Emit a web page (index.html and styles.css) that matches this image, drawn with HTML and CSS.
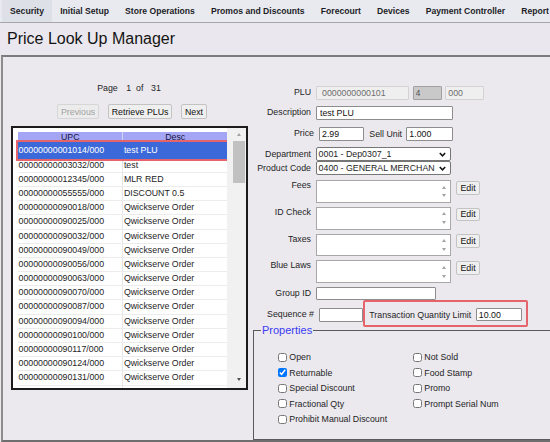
FILE: index.html
```html
<!DOCTYPE html>
<html lang="en">
<head>
    <meta charset="UTF-8">
    <title>Price Look Up Manager</title>
    <link rel="stylesheet" href="styles.css">
</head>
<body>

<div class="topnav">
    <span class="tab active">Security</span>
    <span class="tab">Initial Setup</span>
    <span class="tab">Store Operations</span>
    <span class="tab">Promos and Discounts</span>
    <span class="tab">Forecourt</span>
    <span class="tab">Devices</span>
    <span class="tab">Payment Controller</span>
    <span class="tab">Report</span>
</div>

<div class="titlebar"><h1>Price Look Up Manager</h1></div>

<div class="main">
    <div class="left">
        <div class="pager">Page <span class="pg-cur">1</span> of <span class="pg-total">31</span></div>
        <div class="pager-btns">
            <button class="btn" disabled>Previous</button>
            <button class="btn">Retrieve PLUs</button>
            <button class="btn">Next</button>
        </div>
        <div class="plu-list">
            <div class="plu-table">
                <div class="plu-head"><span>UPC</span><span>Desc</span></div>
                <div class="plu-row selected"><span>00000000001014/000</span><span>test PLU</span></div>
                <div class="plu-row"><span>00000000003032/000</span><span>test</span></div>
                <div class="plu-row"><span>00000000012345/000</span><span>MLR RED</span></div>
                <div class="plu-row"><span>00000000055555/000</span><span>DISCOUNT 0.5</span></div>
                <div class="plu-row"><span>00000000090018/000</span><span>Qwickserve Order</span></div>
                <div class="plu-row"><span>00000000090025/000</span><span>Qwickserve Order</span></div>
                <div class="plu-row"><span>00000000090032/000</span><span>Qwickserve Order</span></div>
                <div class="plu-row"><span>00000000090049/000</span><span>Qwickserve Order</span></div>
                <div class="plu-row"><span>00000000090056/000</span><span>Qwickserve Order</span></div>
                <div class="plu-row"><span>00000000090063/000</span><span>Qwickserve Order</span></div>
                <div class="plu-row"><span>00000000090070/000</span><span>Qwickserve Order</span></div>
                <div class="plu-row"><span>00000000090087/000</span><span>Qwickserve Order</span></div>
                <div class="plu-row"><span>00000000090094/000</span><span>Qwickserve Order</span></div>
                <div class="plu-row"><span>00000000090100/000</span><span>Qwickserve Order</span></div>
                <div class="plu-row"><span>00000000090117/000</span><span>Qwickserve Order</span></div>
                <div class="plu-row"><span>00000000090124/000</span><span>Qwickserve Order</span></div>
                <div class="plu-row"><span>00000000090131/000</span><span>Qwickserve Order</span></div>
                <div class="plu-row"><span></span><span></span></div>
            </div>
            <div class="vscroll">
                <div class="sb-arrow up"></div>
                <div class="sb-thumb"></div>
                <div class="sb-arrow down"></div>
            </div>
        </div>
    </div>

    <div class="right">
        <div class="f-row">
            <label class="lbl">PLU</label>
            <input class="in plu-code" type="text" value="0000000000101" disabled>
            <input class="in plu-mod" type="text" value="4" disabled>
            <input class="in plu-suf" type="text" value="000" disabled>
        </div>
        <div class="f-row mt6">
            <label class="lbl">Description</label>
            <input class="in desc" type="text" value="test PLU">
        </div>
        <div class="f-row mt7">
            <label class="lbl wide">Price</label>
            <input class="in price" type="text" value="2.99">
            <label class="sub-lbl">Sell Unit</label>
            <input class="in sell-unit" type="text" value="1.000">
        </div>
        <div class="f-row mt6">
            <label class="lbl">Department</label>
            <div class="sel">
                <span>0001 - Dep0307_1</span>
                <svg width="7" height="5" viewBox="0 0 7 5"><path d="M0.8 1 L3.5 3.8 L6.2 1" fill="none" stroke="#111" stroke-width="1.5"/></svg>
            </div>
        </div>
        <div class="f-row">
            <label class="lbl">Product Code</label>
            <div class="sel">
                <span>0400 - GENERAL MERCHAN</span>
                <svg width="7" height="5" viewBox="0 0 7 5"><path d="M0.8 1 L3.5 3.8 L6.2 1" fill="none" stroke="#111" stroke-width="1.5"/></svg>
            </div>
        </div>
        <div class="f-row box-row mt5">
            <label class="lbl">Fees</label>
            <div class="lbox"><div class="lbox-sb"></div></div>
            <button class="btn edit">Edit</button>
        </div>
        <div class="f-row box-row mt4">
            <label class="lbl">ID Check</label>
            <div class="lbox"><div class="lbox-sb"></div></div>
            <button class="btn edit">Edit</button>
        </div>
        <div class="f-row box-row mt4">
            <label class="lbl">Taxes</label>
            <div class="lbox"><div class="lbox-sb"></div></div>
            <button class="btn edit">Edit</button>
        </div>
        <div class="f-row box-row mt4">
            <label class="lbl">Blue Laws</label>
            <div class="lbox"><div class="lbox-sb"></div></div>
            <button class="btn edit">Edit</button>
        </div>
        <div class="f-row mt4">
            <label class="lbl">Group ID</label>
            <input class="in group-id" type="text" value="">
        </div>
        <div class="f-row seq-row">
            <label class="lbl wide">Sequence #</label>
            <input class="in seq" type="text" value="">
            <div class="tql">
                <label>Transaction Quantity Limit</label>
                <input class="in" type="text" value="10.00">
            </div>
        </div>

        <fieldset class="props">
            <legend>Properties</legend>
            <div class="props-grid">
                <label class="chk"><input type="checkbox">Open</label>
                <label class="chk"><input type="checkbox">Not Sold</label>
                <label class="chk"><input type="checkbox" checked>Returnable</label>
                <label class="chk"><input type="checkbox">Food Stamp</label>
                <label class="chk"><input type="checkbox">Special Discount</label>
                <label class="chk"><input type="checkbox">Promo</label>
                <label class="chk"><input type="checkbox">Fractional Qty</label>
                <label class="chk"><input type="checkbox">Prompt Serial Num</label>
                <label class="chk"><input type="checkbox">Prohibit Manual Discount</label>
            </div>
        </fieldset>
    </div>
</div>

</body>
</html>
```

FILE: styles.css
```css
* {
    box-sizing: border-box;
}
body {
    margin: 0;
    width: 550px;
    height: 442px;
    overflow: hidden;
    font-family: "Liberation Sans", Arial, sans-serif;
    font-size: 8.8px;
    color: #1e1e1e;
    background: #ebe9ee;
}

/* top menu */
.topnav {
    display: flex;
    height: 23px;
    padding-left: 2px;
    background: #e8eaef;
    border-bottom: 1px solid #a7a7ab;
    white-space: nowrap;
    overflow: hidden;
}
.tab {
    padding: 0 8.1px;
    line-height: 22px;
    font-size: 8.6px;
    font-weight: bold;
    color: #1d1d27;
}
.tab.active {
    background: #dde0e7;
}

.titlebar {
    display: flex;
    align-items: center;
    height: 32px;
    padding-left: 7px;
    background: #eae8ee;
}
.titlebar h1 {
    margin: 0;
    font-size: 16px;
    font-weight: normal;
    color: #141414;
}

.main {
    display: flex;
    height: 387px;
    margin-left: 1px;
    border-top: 2px solid #7b7b7b;
    border-left: 2px solid #8c8c8c;
    border-bottom: 2px solid #6e6e6e;
}

/* left: PLU list */
.left {
    width: 252px;
    flex: none;
    display: flex;
    flex-direction: column;
    align-items: center;
}
.pager {
    padding-top: 26px;
    line-height: 11px;
}
.pg-cur {
    margin-left: 6px;
    margin-right: 2.5px;
}
.pg-total {
    margin-left: 5.2px;
}
.pager-btns {
    display: flex;
    gap: 8.5px;
    margin-top: 10px;
    margin-left: 6px;
}
.btn {
    height: 15px;
    padding: 0 3px;
    font: inherit;
    color: #111;
    background: #efefef;
    border: 1px solid #c3c3c3;
    border-radius: 2px;
}
.btn:disabled {
    color: #a2a2a2;
    background: #ececec;
    border-color: #d6d6d6;
}

.plu-list {
    display: flex;
    width: 237px;
    height: 264px;
    margin-top: 7px;
    padding-left: 5px;
    background: #fff;
    border: 2px solid #1c1c1c;
    overflow: hidden;
}
.plu-table {
    width: 209px;
    flex: none;
    padding-top: 4px;
}
.plu-head, .plu-row {
    display: flex;
}
.plu-head span, .plu-row span {
    padding-left: 1px;
    white-space: nowrap;
}
.plu-head span:first-child, .plu-row span:first-child {
    width: 104.4px;
}
.plu-head span:last-child, .plu-row span:last-child {
    flex: 1;
    border-left: 1px solid #e6e6e6;
}
.plu-head {
    height: 10px;
    line-height: 10px;
    background: #a5a5f6;
    color: #16163a;
}
.plu-head span {
    text-align: center;
}
.plu-head span:last-child {
    border-left-color: #d4d4fb;
}
.plu-row {
    height: 14.2px;
    border-bottom: 1px solid #ececec;
}
.plu-row span {
    line-height: 13.2px;
}
.plu-row.selected {
    height: 16.6px;
    border-bottom: none;
    background: #3c69d9;
    color: #fff;
    outline: 2px solid #e5636b;
}
.plu-row.selected span {
    line-height: 16.6px;
    border-left-color: #3c69d9;
}

.vscroll {
    width: 19px;
    flex: none;
    display: flex;
    flex-direction: column;
    padding-left: 6.5px;
    background: #f1f1f1;
}
.sb-thumb {
    width: 12px;
    height: 42px;
    background: #c1c1c1;
}
.sb-arrow {
    width: 12px;
    display: flex;
    justify-content: center;
    align-items: center;
}
.sb-arrow.up {
    height: 12.7px;
}
.sb-arrow.down {
    height: 18px;
    margin-top: auto;
}
.sb-arrow::before {
    content: "";
    border-left: 2.5px solid transparent;
    border-right: 2.5px solid transparent;
}
.sb-arrow.up::before {
    border-bottom: 3px solid #a3a3a3;
}
.sb-arrow.down::before {
    border-top: 3px solid #505050;
}

/* right: PLU form */
.right {
    flex: 1;
    min-width: 0;
    display: flex;
    flex-direction: column;
    padding-top: 28.7px;
}
.f-row {
    display: flex;
    align-items: center;
}
.mt4 { margin-top: 4px; }
.mt5 { margin-top: 5px; }
.mt6 { margin-top: 6.3px; }
.mt7 { margin-top: 7px; }

.lbl {
    width: 56px;
    flex: none;
    margin-right: 5px;
    text-align: right;
    line-height: 11px;
}
.lbl.wide {
    width: 59px;
}
.sub-lbl {
    margin-left: 5px;
}

.in {
    height: 14px;
    padding: 0 2px;
    font: inherit;
    color: #111;
    background: #fff;
    border: 1px solid #8d8d8d;
    border-radius: 1px;
}
.in:disabled {
    color: #6e6e6e;
    background: #efefef;
    border-color: #d3d3d3;
}
.plu-code { width: 92.6px; padding-left: 5px; }
.plu-mod { width: 29.4px; margin-left: 4px; }
.in.plu-mod:disabled {
    background: #c9c9c9;
    border-color: #a1a1a1;
    color: #555;
}
.plu-suf { width: 39px; margin-left: 3.3px; }
.desc { width: 137px; padding-left: 3px; }
.price { width: 45.3px; }
.sell-unit { width: 46.4px; margin-left: 4.3px; }
.group-id { width: 120px; height: 13px; }
.seq { width: 44px; }

.sel {
    display: flex;
    align-items: center;
    width: 135px;
    height: 14px;
    padding-left: 1.6px;
    background: #fff;
    border: 1px solid #767676;
    border-radius: 2px;
}
.sel span {
    flex: 1;
    white-space: nowrap;
}
.sel svg {
    flex: none;
    margin: 0 4px 0 2px;
}

.box-row {
    align-items: flex-start;
}
.lbox {
    display: flex;
    justify-content: flex-end;
    width: 135px;
    height: 22.7px;
    background: #fff;
    border: 1px solid #a8a8a8;
}
.lbox-sb {
    width: 12px;
    display: flex;
    flex-direction: column;
    justify-content: center;
    align-items: center;
    gap: 5.7px;
}
.lbox-sb::before, .lbox-sb::after {
    content: "";
    border-left: 2.5px solid transparent;
    border-right: 2.5px solid transparent;
}
.lbox-sb::before {
    border-bottom: 3px solid #a3a3a3;
}
.lbox-sb::after {
    border-top: 3px solid #a3a3a3;
}
.btn.edit {
    height: 13.6px;
    margin-left: 5px;
    margin-top: 0.7px;
    padding: 0 3.5px;
}

.seq-row > .lbl, .seq-row > .in {
    margin-top: 2px;
}
.tql {
    display: flex;
    align-items: center;
    padding: 6px 4.3px 4px;
    border: 2px solid #e5636b;
    border-radius: 2px;
}
.tql .in {
    width: 46px;
    height: 13.3px;
    margin-left: 4.7px;
}

.props {
    flex: 1;
    min-height: 0;
    margin: -3.5px -10px 0 -2px;
    padding: 0;
    border: 1px solid #5a5a5a;
}
.props legend {
    margin-left: 7px;
    padding: 0 1px;
    font-size: 11px;
    line-height: 13px;
    color: #3a3af2;
}
.props-grid {
    display: grid;
    grid-template-columns: 135px auto;
    grid-auto-rows: 15.5px;
    padding: 12.5px 0 0 24px;
}
.chk {
    display: flex;
    align-items: center;
    gap: 2.3px;
    white-space: nowrap;
}
.chk input {
    width: 9px;
    height: 9px;
    margin: 0;
}
```
